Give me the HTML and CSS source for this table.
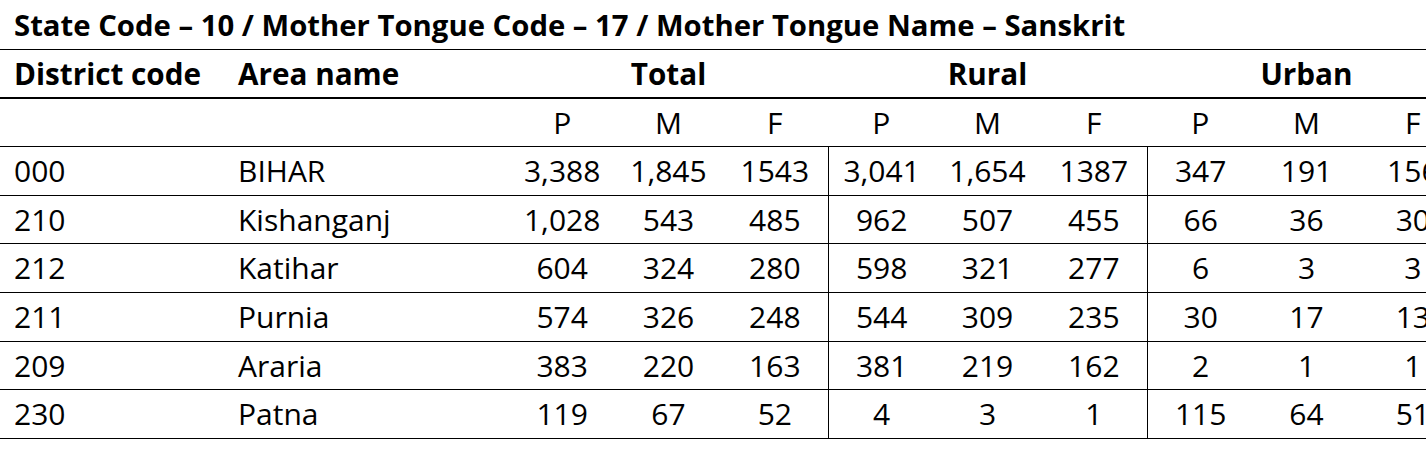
FILE: index.html
```html
<!DOCTYPE html>
<html>
<head>
<meta charset="utf-8">
<link rel="stylesheet" href="styles.css">
</head>
<body>
<div class="wrap">
<table class="census">
<caption>State Code – 10 / Mother Tongue Code – 17 / Mother Tongue Name – Sanskrit</caption>
<colgroup><col class="c-code"><col class="c-area"><col span="9" class="c-num"></colgroup>
<thead>
<tr class="h1"><th class="l">District code</th><th class="l">Area name</th><th colspan="3">Total</th><th colspan="3">Rural</th><th colspan="3">Urban</th></tr>
<tr class="h2"><td></td><td></td><td>P</td><td>M</td><td>F</td><td>P</td><td>M</td><td>F</td><td>P</td><td>M</td><td>F</td></tr>
</thead>
<tbody>
<tr><td class="l">000</td><td class="l">BIHAR</td><td>3,388</td><td>1,845</td><td>1543</td><td class="g">3,041</td><td>1,654</td><td>1387</td><td class="g">347</td><td>191</td><td>156</td></tr>
<tr><td class="l">210</td><td class="l">Kishanganj</td><td>1,028</td><td>543</td><td>485</td><td class="g">962</td><td>507</td><td>455</td><td class="g">66</td><td>36</td><td>30</td></tr>
<tr><td class="l">212</td><td class="l">Katihar</td><td>604</td><td>324</td><td>280</td><td class="g">598</td><td>321</td><td>277</td><td class="g">6</td><td>3</td><td>3</td></tr>
<tr><td class="l">211</td><td class="l">Purnia</td><td>574</td><td>326</td><td>248</td><td class="g">544</td><td>309</td><td>235</td><td class="g">30</td><td>17</td><td>13</td></tr>
<tr><td class="l">209</td><td class="l">Araria</td><td>383</td><td>220</td><td>163</td><td class="g">381</td><td>219</td><td>162</td><td class="g">2</td><td>1</td><td>1</td></tr>
<tr><td class="l">230</td><td class="l">Patna</td><td>119</td><td>67</td><td>52</td><td class="g">4</td><td>3</td><td>1</td><td class="g">115</td><td>64</td><td>51</td></tr>
</tbody>
</table>
</div>
</body>
</html>
```

FILE: styles.css
```css
html, body { margin: 0; padding: 0; background: #fff; overflow: hidden; }
.wrap { width: 100%; overflow: hidden; }
.census {
  border-collapse: separate;
  border-spacing: 0;
  table-layout: fixed;
  width: 1466px;
  font-family: "Open Sans", sans-serif;
  font-size: 30px;
  color: #000;
}
.census caption {
  text-align: left;
  font-weight: bold;
  font-size: 29.3px;
  padding: 2px 14px 0;
  line-height: 47px;
  border-bottom: 1px solid #000;
  white-space: nowrap;
}
.c-code { width: 224px; }
.c-area { width: 285px; }
.c-num { width: 106.33px; }
.census th, .census td {
  padding: 0 14px;
  text-align: center;
  white-space: nowrap;
  border-bottom: 1px solid #000;
  line-height: 47.67px;
}
.census th { font-weight: bold; font-size: 29.7px; line-height: 47px; border-bottom: 2px solid #000; }
.census .h2 td { line-height: 47px; }
.census .l { text-align: left; }
.census .g { border-left: 1px solid #000; }
```
